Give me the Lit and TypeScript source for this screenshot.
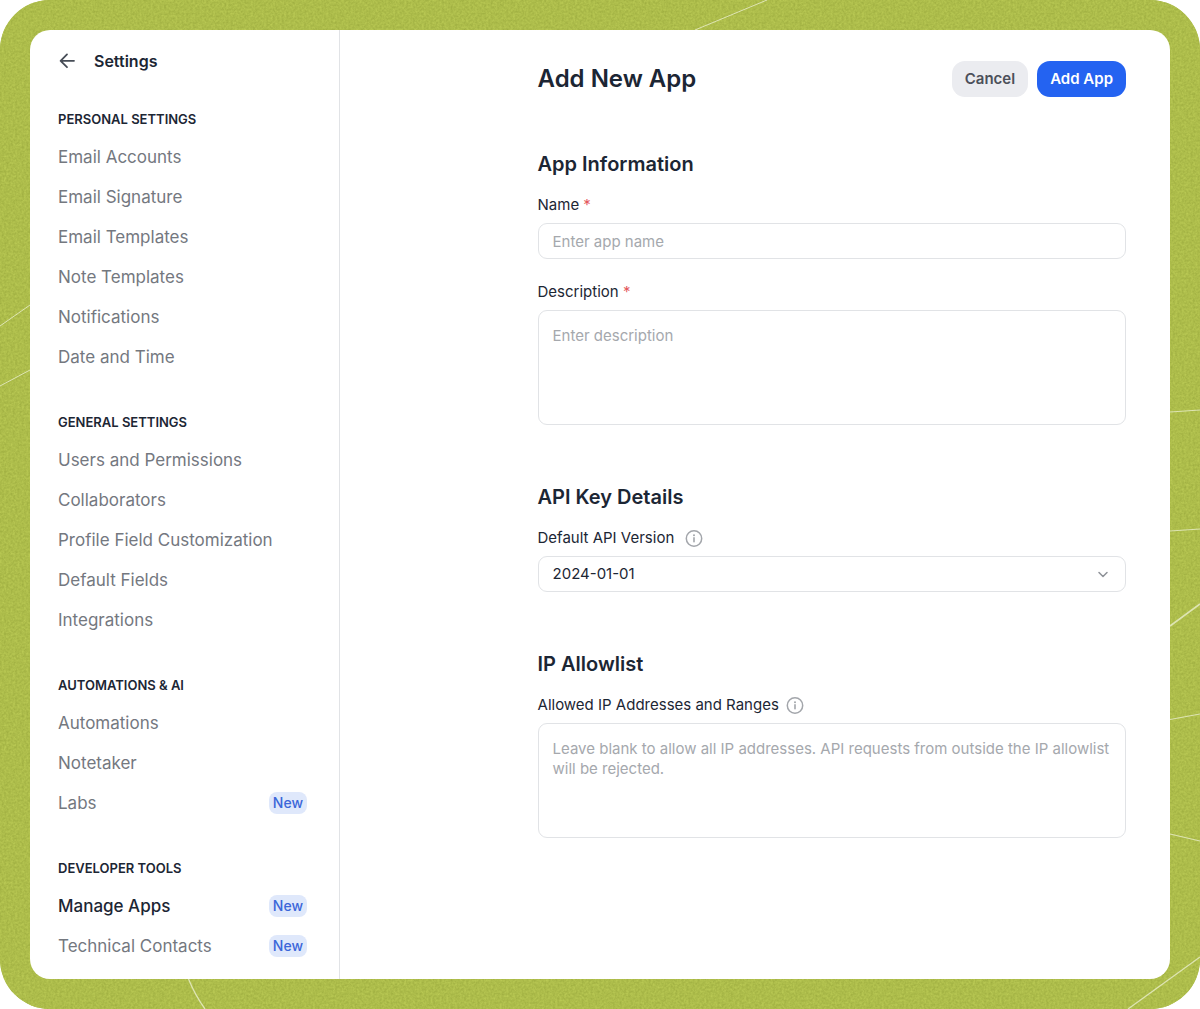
import { LitElement, html, css, svg, nothing } from "lit";
import { customElement, property, state } from "lit/decorators.js";
import { classMap } from "lit/directives/class-map.js";

interface NavItem {
  label: string;
  isNew?: boolean;
}

interface NavGroup {
  title: string;
  items: NavItem[];
}

const GROUPS: NavGroup[] = [
  {
    title: "PERSONAL SETTINGS",
    items: [
      { label: "Email Accounts" },
      { label: "Email Signature" },
      { label: "Email Templates" },
      { label: "Note Templates" },
      { label: "Notifications" },
      { label: "Date and Time" },
    ],
  },
  {
    title: "GENERAL SETTINGS",
    items: [
      { label: "Users and Permissions" },
      { label: "Collaborators" },
      { label: "Profile Field Customization" },
      { label: "Default Fields" },
      { label: "Integrations" },
    ],
  },
  {
    title: "AUTOMATIONS & AI",
    items: [{ label: "Automations" }, { label: "Notetaker" }, { label: "Labs", isNew: true }],
  },
  {
    title: "DEVELOPER TOOLS",
    items: [
      { label: "Manage Apps", isNew: true },
      { label: "Technical Contacts", isNew: true },
    ],
  },
];

/** Thin rays that cross the coloured frame behind the card. */
const RAYS: { d: string; width: number }[] = [
  { d: "M0 326 L30 305", width: 1 },
  { d: "M0 386 L30 370", width: 1 },
  { d: "M695 30 L767 0", width: 1 },
  { d: "M1170 412 L1200 410", width: 1 },
  { d: "M1170 531 L1200 529", width: 1 },
  { d: "M1170 626 L1200 604", width: 1.6 },
  { d: "M1170 719.5 L1200 714", width: 1.2 },
  { d: "M1170 834 L1200 841", width: 1.2 },
  { d: "M188.5 979 Q195 995 205 1009", width: 1.3 },
  { d: "M1128 1009 L1200 957", width: 1.3 },
];

@customElement("settings-nav")
export class SettingsNav extends LitElement {
  static styles = css`
    :host {
      display: block;
    }
    .top {
      display: flex;
      align-items: center;
      gap: 17px;
      height: 24px;
      margin-bottom: 36px;
    }
    .back {
      display: flex;
      padding: 0;
      border: 0;
      background: none;
      cursor: pointer;
    }
    .heading {
      margin: 0;
      font-size: 16px;
      font-weight: 600;
      line-height: 24px;
      color: #1c2634;
    }
    .group + .group {
      margin-top: 35px;
    }
    .group-title {
      margin: 0 0 8px;
      font-size: 13px;
      font-weight: 600;
      line-height: 20px;
      color: #1c2634;
    }
    .list {
      margin: 0;
      padding: 0;
      list-style: none;
    }
    .link {
      display: flex;
      align-items: center;
      justify-content: space-between;
      font-size: 17px;
      line-height: 40px;
      color: #74787f;
      text-decoration: none;
    }
    .link.current {
      font-weight: 500;
      color: #1c2634;
    }
    .badge {
      padding: 0 4px;
      border-radius: 8px;
      background: #dfe8fb;
      font-size: 14px;
      font-weight: 500;
      line-height: 22px;
      color: #3b66d9;
    }
  `;

  @property() current = "";

  render() {
    return html`
      <div class="top">
        <button class="back" type="button" aria-label="Back">
          <svg width="19" height="18" viewBox="0 0 19 18" fill="none" stroke="#474d57" stroke-width="1.8" stroke-linecap="round" stroke-linejoin="round">
            <path d="M16 8.800H2.600M9 2.400L2.600 8.800l6.400 6.400" />
          </svg>
        </button>
        <h2 class="heading">Settings</h2>
      </div>
      <nav>
        ${GROUPS.map(
          (group) => html`
            <section class="group">
              <h3 class="group-title">${group.title}</h3>
              <ul class="list">
                ${group.items.map((item) => this.renderItem(item))}
              </ul>
            </section>
          `
        )}
      </nav>
    `;
  }

  private renderItem(item: NavItem) {
    const current = item.label === this.current;
    return html`
      <li>
        <a class=${classMap({ link: true, current })} href="#" aria-current=${current ? "page" : nothing}>
          <span>${item.label}</span>
          ${item.isNew ? html`<span class="badge">New</span>` : nothing}
        </a>
      </li>
    `;
  }
}

@customElement("app-form")
export class AppForm extends LitElement {
  static styles = css`
    :host {
      display: block;
    }
    .header {
      display: flex;
      align-items: center;
      justify-content: space-between;
      margin-bottom: 53px;
    }
    .title {
      margin: 0;
      font-size: 24px;
      font-weight: 600;
      line-height: 32px;
    }
    .actions {
      display: flex;
      gap: 9px;
    }
    .button {
      height: 36px;
      padding: 0 13px;
      border: 0;
      border-radius: 13px;
      background: #ebecf0;
      font: inherit;
      font-size: 15px;
      font-weight: 600;
      line-height: 20px;
      color: #4b505a;
      cursor: pointer;
    }
    .button.primary {
      background: #2463f1;
      color: #fff;
    }
    .section + .section {
      margin-top: 58px;
    }
    .section-title {
      margin: 0 0 17px;
      font-size: 20px;
      font-weight: 600;
      line-height: 28px;
    }
    .field + .field {
      margin-top: 23px;
    }
    .label-row {
      display: flex;
      align-items: center;
      gap: 7px;
      height: 20px;
      margin-bottom: 8px;
      font-size: 15px;
      line-height: 20px;
    }
    .label-row.wide {
      gap: 11px;
    }
    .required {
      color: #e4595c;
    }
    .info {
      display: block;
    }
    .control {
      display: block;
      box-sizing: border-box;
      width: 100%;
      border: 1px solid #e1e3e6;
      border-radius: 9px;
      background: #fff;
      font: inherit;
      font-size: 15px;
      line-height: 20px;
      color: #1c2634;
      outline-color: #2463f1;
    }
    .control::placeholder {
      color: #a5a8ad;
      opacity: 1;
    }
    .line {
      height: 36px;
      padding: 0 14px;
    }
    .area {
      height: 115px;
      padding: 15px 14px;
      resize: none;
    }
    .select {
      display: grid;
      align-items: center;
    }
    .select > * {
      grid-area: 1 / 1;
    }
    .select .control {
      appearance: none;
    }
    .chevron {
      justify-self: end;
      margin-right: 17px;
      pointer-events: none;
    }
  `;

  @state() private version = "2024-01-01";

  private infoIcon() {
    return html`
      <svg class="info" width="18" height="18" viewBox="0 0 18 18" fill="none" role="img" aria-label="More information">
        <circle cx="9" cy="9.500" r="7.700" stroke="#a3a6ab" stroke-width="1.500" />
        <path d="M9 8.900v3.800" stroke="#a3a6ab" stroke-width="1.600" stroke-linecap="round" />
        <circle cx="9" cy="6.300" r="1" fill="#a3a6ab" />
      </svg>
    `;
  }

  render() {
    return html`
      <form @submit=${(e: Event) => e.preventDefault()}>
        <header class="header">
          <h1 class="title">Add New App</h1>
          <div class="actions">
            <button class="button" type="button">Cancel</button>
            <button class="button primary" type="submit">Add App</button>
          </div>
        </header>

        <section class="section">
          <h2 class="section-title">App Information</h2>
          <div class="field">
            <div class="label-row">
              <label for="name">Name <span class="required">*</span></label>
            </div>
            <input class="control line" id="name" type="text" placeholder="Enter app name" />
          </div>
          <div class="field">
            <div class="label-row">
              <label for="description">Description <span class="required">*</span></label>
            </div>
            <textarea class="control area" id="description" placeholder="Enter description"></textarea>
          </div>
        </section>

        <section class="section">
          <h2 class="section-title">API Key Details</h2>
          <div class="field">
            <div class="label-row wide">
              <label for="version">Default API Version</label>
              ${this.infoIcon()}
            </div>
            <div class="select">
              <select
                class="control line"
                id="version"
                @change=${(e: Event) => (this.version = (e.target as HTMLSelectElement).value)}
              >
                <option value="2024-01-01" ?selected=${this.version === "2024-01-01"}>2024-01-01</option>
              </select>
              <svg class="chevron" width="12" height="12" viewBox="0 0 12 12" fill="none" stroke="#8d9197" stroke-width="1.500" stroke-linecap="round" stroke-linejoin="round" aria-hidden="true">
                <path d="M2 4.500l4 4 4-4" />
              </svg>
            </div>
          </div>
        </section>

        <section class="section">
          <h2 class="section-title">IP Allowlist</h2>
          <div class="field">
            <div class="label-row">
              <label for="allowlist">Allowed IP Addresses and Ranges</label>
              ${this.infoIcon()}
            </div>
            <textarea
              class="control area"
              id="allowlist"
              placeholder="Leave blank to allow all IP addresses. API requests from outside the IP allowlist will be rejected."
            ></textarea>
          </div>
        </section>
      </form>
    `;
  }
}

@customElement("app-root")
export class AppRoot extends LitElement {
  static styles = css`
    :host {
      display: block;
      background: #fff;
      font-family: Inter, "Liberation Sans", sans-serif;
      color: #1c2634;
    }
    .frame {
      position: relative;
      display: flex;
      box-sizing: border-box;
      min-height: 100vh;
      padding: 30px;
      border-radius: 50px;
      background: #adbd4b;
      overflow: hidden;
    }
    .backdrop {
      position: absolute;
      inset: 0;
      width: 100%;
      height: 100%;
    }
    .card {
      position: relative;
      display: grid;
      grid-template-columns: 310px minmax(0, 1fr);
      flex: 1;
      border-radius: 20px;
      background: #fff;
      overflow: hidden;
    }
    .sidebar {
      box-sizing: border-box;
      padding: 19px 32px 12px 28px;
      border-right: 1px solid #e1e3e6;
    }
    .main {
      padding: 31px 44px 31px 23.8%;
    }
  `;

  render() {
    return html`
      <div class="frame">
        <svg class="backdrop" viewBox="0 0 1200 1009" preserveAspectRatio="none" aria-hidden="true">
          <filter id="grain" x="0" y="0" width="100%" height="100%" color-interpolation-filters="sRGB">
            <feTurbulence type="fractalNoise" baseFrequency="0.45" numOctaves="2" seed="4" />
            <feColorMatrix values="0.14 0 0 0 0.609  0.14 0 0 0 0.67  0.1 0 0 0 0.244  0 0 0 0 1" />
          </filter>
          <rect width="1200" height="1009" filter="url(#grain)" />
          ${RAYS.map(
            (ray) => svg`<path d=${ray.d} fill="none" stroke="#e6ebc6" stroke-opacity="0.85" stroke-width=${ray.width} />`
          )}
        </svg>
        <div class="card">
          <aside class="sidebar">
            <settings-nav current="Manage Apps"></settings-nav>
          </aside>
          <main class="main">
            <app-form></app-form>
          </main>
        </div>
      </div>
    `;
  }
}
